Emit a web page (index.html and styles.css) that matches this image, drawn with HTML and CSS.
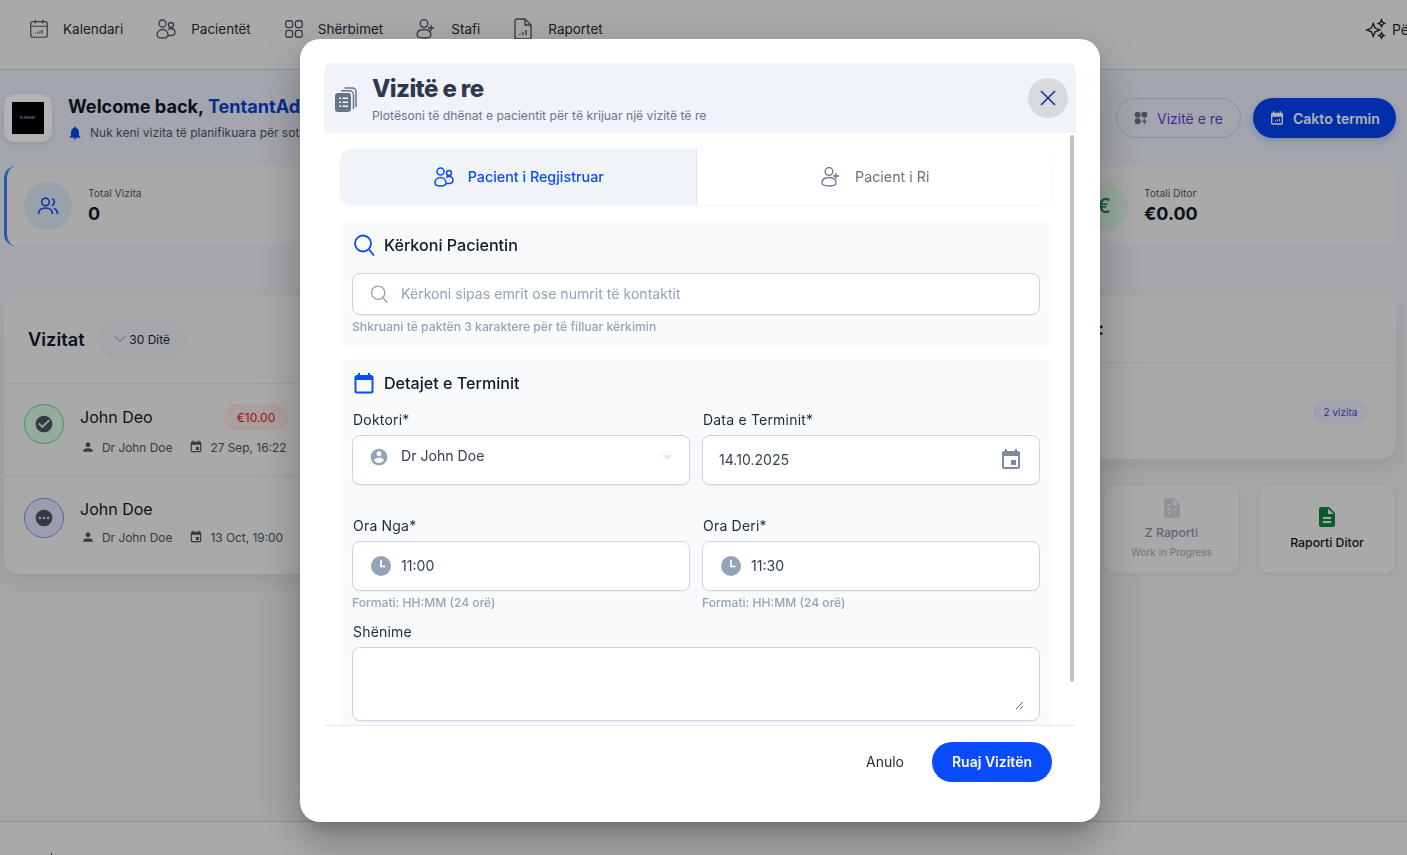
FILE: index.html
```html
<!DOCTYPE html>
<html lang="sq">
<head>
<meta charset="utf-8">
<title>Vizitë e re</title>
<link rel="stylesheet" href="styles.css">
</head>
<body>
<div class="page">
  <header class="topbar">
    <nav class="nav">
      <a class="nav-item"><svg class="ico22" viewBox="0 0 24 24" fill="none" stroke="currentColor" stroke-width="1.3"><rect x="3" y="4" width="18" height="17" rx="2.5"/><path d="M3 9h18M8 2v4M16 2v4M8 17v-1M10.500 17v-2M13 17v-3M15.500 17v-4" /></svg>Kalendari</a>
      <a class="nav-item"><svg class="ico24" viewBox="0 0 24 24" fill="none" stroke="currentColor" stroke-width="1.3"><circle cx="8.500" cy="6.500" r="3.500"/><circle cx="17" cy="8" r="2.500"/><path d="M3 18c0-3.500 2.500-5.500 5.500-5.500s5.500 2 5.500 5.500c0 2-2 3-5.500 3S3 20 3 18zM14 12.500c1-.8 2-1 3-1 2.500 0 4 1.800 4 4 0 2-1.500 3-4 3h-3"/></svg>Pacientët</a>
      <a class="nav-item nav-grid"><svg class="ico22" viewBox="0 0 24 24" fill="none" stroke="currentColor" stroke-width="1.4"><rect x="3" y="3" width="7.500" height="7.500" rx="2.500"/><rect x="13.500" y="3" width="7.500" height="7.500" rx="2.500"/><rect x="3" y="13.500" width="7.500" height="7.500" rx="2.500"/><rect x="13.500" y="13.500" width="7.500" height="7.500" rx="2.500"/></svg>Shërbimet</a>
      <a class="nav-item"><svg class="ico24" viewBox="0 0 24 24" fill="none" stroke="currentColor" stroke-width="1.3"><circle cx="10" cy="6.500" r="3.800"/><path d="M3 18c0-3.500 3-5.500 7-5.500s7 2 7 5.500c0 2-3 3-7 3s-7-1-7-3zM17 8v6M14 11h6" /></svg>Stafi</a>
      <a class="nav-item"><svg class="ico24" viewBox="0 0 24 24" fill="none" stroke="currentColor" stroke-width="1.3"><path d="M6 2h8l6 6v12a2 2 0 0 1-2 2H6a2 2 0 0 1-2-2V4a2 2 0 0 1 2-2zM14 2v6h6M9 18v-1M12 18v-3M15 18v-5"/></svg>Raportet</a>
    </nav>
    <a class="nav-item nav-ai"><svg class="ico22" viewBox="0 0 24 24" fill="none" stroke="currentColor" stroke-width="1.5"><path d="M9 6l2 5 5 2-5 2-2 5-2-5-5-2 5-2zM18 2l1 2.500L21.500 6 19 7l-1 2.500L17 7l-2.500-1L17 4.500zM18 16l1 2 2 1-2 1-1 2-1-2-2-1 2-1z"/></svg>Për</a>
  </header>

  <main class="content">
    <section class="welcome">
      <div class="welcome-left">
        <div class="logo"><div class="logo-black"><span class="logo-text">KLINIKABC</span></div></div>
        <div>
          <h1 class="welcome-title">Welcome back, <span class="brand">TentantAdmin</span></h1>
          <p class="welcome-sub"><svg class="ico16 blue-dark" viewBox="0 0 24 24" fill="currentColor"><path d="M12 22c1.100 0 2-.9 2-2h-4c0 1.100.89 2 2 2zm6-6v-5c0-3.070-1.640-5.640-4.500-6.320V4c0-.83-.67-1.500-1.500-1.500s-1.500.67-1.500 1.500v.68C7.630 5.360 6 7.920 6 11v5l-2 2v1h16v-1l-2-2z"/></svg>Nuk keni vizita të planifikuara për sot</p>
        </div>
      </div>
      <div class="welcome-actions">
        <button class="btn-outline"><svg class="ico16" viewBox="0 0 24 24" fill="currentColor"><circle cx="7" cy="7" r="4.500"/><circle cx="17" cy="7" r="4.500"/><circle cx="7" cy="17" r="4.500"/><path d="M16 13h2v3h3v2h-3v3h-2v-3h-3v-2h3z"/></svg><span>Vizitë e re</span></button>
        <button class="btn-solid"><svg class="ico16" viewBox="0 0 24 24" fill="currentColor"><path fill-rule="evenodd" d="M19 4h-1V2h-2v2H8V2H6v2H5a2 2 0 0 0-2 2v14a2 2 0 0 0 2 2h14a2 2 0 0 0 2-2V6a2 2 0 0 0-2-2zm0 16H5V10h14zM9 17h1.500v-2H9zm3 0h1.500v-3H12zm3 0h1.500v-4H15z"/></svg>Cakto termin</button>
      </div>
    </section>

    <section class="stats">
      <article class="stat stat-first">
        <div class="stat-icon stat-blue"><svg class="ico24" viewBox="0 0 24 24" fill="none" stroke="currentColor" stroke-width="1.500"><circle cx="9.500" cy="8" r="3.800"/><path d="M2.500 20c0-4 3-6 7-6s7 2 7 6M16 4.500a3.800 3.800 0 0 1 0 7M18 14.500c2 .8 3.500 2.500 3.500 5.500"/></svg></div>
        <div><div class="stat-label">Total Vizita</div><div class="stat-value">0</div></div>
      </article>
      <article class="stat stat-last">
        <div class="stat-icon stat-green">€</div>
        <div><div class="stat-label">Totali Ditor</div><div class="stat-value">€0.00</div></div>
      </article>
    </section>

    <section class="columns">
      <div class="panel visits">
        <div class="visits-head">
          <h2 class="visits-title">Vizitat</h2>
          <div class="chip"><svg class="ico12" viewBox="0 0 24 24" fill="none" stroke="currentColor" stroke-width="1.800"><path d="M2 7l10 10L22 7"/></svg>30 Ditë</div>
        </div>
        <div class="visit">
          <div class="status status-done"><svg class="ico20" viewBox="0 0 24 24" fill="currentColor"><path d="M12 2C6.480 2 2 6.480 2 12s4.480 10 10 10 10-4.480 10-10S17.520 2 12 2zm-2 15l-5-5 1.410-1.410L10 14.170l7.590-7.590L19 8l-9 9z"/></svg></div>
          <div class="visit-body">
            <div class="visit-top"><span class="visit-name">John Deo</span><span class="price">€10.00</span></div>
            <div class="visit-meta"><svg class="ico14" viewBox="0 0 24 24" fill="currentColor"><path d="M12 12c2.210 0 4-1.790 4-4s-1.790-4-4-4-4 1.790-4 4 1.790 4 4 4zm0 2c-2.670 0-8 1.340-8 4v2h16v-2c0-2.660-5.330-4-8-4z"/></svg><span>Dr John Doe</span><svg class="ico14 meta-gap" viewBox="0 0 24 24" fill="currentColor"><path d="M17 12h-5v5h5v-5zM16 1v2H8V1H6v2H5c-1.110 0-1.990.9-1.990 2L3 19c0 1.100.89 2 2 2h14c1.100 0 2-.9 2-2V5c0-1.100-.9-2-2-2h-1V1h-2zm3 18H5V8h14v11z"/></svg><span>27 Sep, 16:22</span></div>
          </div>
        </div>
        <div class="visit">
          <div class="status status-wait"><svg class="ico20" viewBox="0 0 24 24" fill="currentColor"><path fill-rule="evenodd" d="M12 2a10 10 0 1 0 0 20 10 10 0 0 0 0-20zM7 10.500a1.500 1.500 0 1 1 0 3 1.500 1.500 0 0 1 0-3zm5 0a1.500 1.500 0 1 1 0 3 1.500 1.500 0 0 1 0-3zm5 0a1.500 1.500 0 1 1 0 3 1.500 1.500 0 0 1 0-3z"/></svg></div>
          <div class="visit-body">
            <div class="visit-top"><span class="visit-name">John Doe</span></div>
            <div class="visit-meta"><svg class="ico14" viewBox="0 0 24 24" fill="currentColor"><path d="M12 12c2.210 0 4-1.790 4-4s-1.790-4-4-4-4 1.790-4 4 1.790 4 4 4zm0 2c-2.670 0-8 1.340-8 4v2h16v-2c0-2.660-5.330-4-8-4z"/></svg><span>Dr John Doe</span><svg class="ico14 meta-gap" viewBox="0 0 24 24" fill="currentColor"><path d="M17 12h-5v5h5v-5zM16 1v2H8V1H6v2H5c-1.110 0-1.990.9-1.990 2L3 19c0 1.100.89 2 2 2h14c1.100 0 2-.9 2-2V5c0-1.100-.9-2-2-2h-1V1h-2zm3 18H5V8h14v11z"/></svg><span>13 Oct, 19:00</span></div>
          </div>
        </div>
      </div>
      <div class="right-col">
        <div class="panel schedule">
          <div class="schedule-head"><h2 class="schedule-title">Vizitat sipas doktorit:</h2></div>
          <div class="schedule-body"><span class="count">2 vizita</span></div>
        </div>
        <div class="reports">
          <div class="report report-off">
            <svg class="ico24" viewBox="0 0 24 24" fill="currentColor"><path fill-rule="evenodd" d="M14 2H6a2 2 0 0 0-2 2v16a2 2 0 0 0 2 2h12a2 2 0 0 0 2-2V8zM13 9V3.500L18.500 9zM8 8h2v2H8zM8 12h2v2H8zM8 16h2v2H8z"/></svg>
            <div class="report-title">Z Raporti</div>
            <div class="report-sub">Work in Progress</div>
          </div>
          <div class="report report-on">
            <svg class="ico24 green" viewBox="0 0 24 24" fill="currentColor"><path d="M14 2H6c-1.100 0-1.990.9-1.990 2L4 20c0 1.100.89 2 1.990 2H18c1.100 0 2-.9 2-2V8l-6-6zm2 16H8v-2h8v2zm0-4H8v-2h8v2zm-3-5V3.500L18.500 9H13z"/></svg>
            <div class="report-title">Raporti Ditor</div>
          </div>
        </div>
      </div>
    </section>
  </main>
  <footer class="footer"></footer>
</div>

<div class="backdrop">
  <div class="modal" role="dialog">
    <div class="modal-head">
      <svg class="head-icon" viewBox="0 0 22 25"><path d="M6 3.800h8.500a4 4 0 0 1 4 4V22M9.500 .9h7.500a4 4 0 0 1 4 4V20" fill="none" stroke="currentColor" stroke-width="1.500"/><path fill="currentColor" fill-rule="evenodd" d="M3 6h10a3 3 0 0 1 3 3v13a3 3 0 0 1-3 3H3a3 3 0 0 1-3-3V9a3 3 0 0 1 3-3zm1 4.500V12h2v-1.500zm3.500 0V12H13v-1.500zM4 14.500V16h2v-1.500zm3.500 0V16H13v-1.500zM4 18.500V20h2v-1.500zm3.500 0V20H13v-1.500z"/></svg>
      <div class="head-text">
        <h2 class="modal-title">Vizitë e re</h2>
        <p class="modal-sub">Plotësoni të dhënat e pacientit për të krijuar një vizitë të re</p>
      </div>
      <button class="close" aria-label="Mbyll"><svg viewBox="0 0 24 24" fill="none" stroke="currentColor" stroke-width="1.700"><path d="M5 5l14 14M19 5L5 19"/></svg></button>
    </div>

    <div class="modal-body">
      <div class="scroll-thumb"></div>
      <div class="tabs">
        <div class="tab tab-active"><svg class="ico24" viewBox="0 0 24 24" fill="none" stroke="currentColor" stroke-width="1.500"><circle cx="8.500" cy="6.500" r="3.500"/><circle cx="17" cy="8" r="2.500"/><path d="M3 18c0-3.500 2.500-5.500 5.500-5.500s5.500 2 5.500 5.500c0 2-2 3-5.500 3S3 20 3 18zM14 12.500c1-.8 2-1 3-1 2.500 0 4 1.800 4 4 0 2-1.500 3-4 3h-3"/></svg><span class="tab-text">Pacient i Regjistruar</span></div>
        <div class="tab"><svg class="ico24" viewBox="0 0 24 24" fill="none" stroke="currentColor" stroke-width="1.300"><circle cx="10" cy="6.500" r="3.800"/><path d="M3 18c0-3.500 3-5.500 7-5.500s7 2 7 5.500c0 2-3 3-7 3s-7-1-7-3zM17 8v6M14 11h6"/></svg><span class="tab-text">Pacient i Ri</span></div>
      </div>

      <section class="group group-search">
        <h3 class="group-title"><svg class="ico24 accent" viewBox="0 0 24 24" fill="none" stroke="currentColor" stroke-width="1.800"><circle cx="11" cy="10.500" r="8"/><path d="M17 16.500l5 6"/></svg>Kërkoni Pacientin</h3>
        <div class="field field-search"><svg class="ico20 muted" viewBox="0 0 24 24" fill="none" stroke="currentColor" stroke-width="1.600"><circle cx="11" cy="10.500" r="8"/><path d="M17 16.500l5 6"/></svg><span class="placeholder">Kërkoni sipas emrit ose numrit të kontaktit</span></div>
        <p class="hint hint-wide">Shkruani të paktën 3 karaktere për të filluar kërkimin</p>
      </section>

      <section class="group group-details">
        <h3 class="group-title"><svg class="ico24 accent" viewBox="0 0 24 24" fill="currentColor"><path d="M19 4h-1V2h-2v2H8V2H6v2H5a2.500 2.500 0 0 0-2.500 2.500V20A2.500 2.500 0 0 0 5 22.500h14a2.500 2.500 0 0 0 2.500-2.500V6.500A2.500 2.500 0 0 0 19 4zm.5 16a.5.5 0 0 1-.5.5H5a.5.5 0 0 1-.5-.5V9h15z"/></svg>Detajet e Terminit</h3>
        <div class="form-grid">
          <div>
            <label class="label">Doktori*</label>
            <div class="field field-tall field-doc"><svg class="ico20 muted" viewBox="0 0 24 24" fill="currentColor"><path d="M12 2C6.480 2 2 6.480 2 12s4.480 10 10 10 10-4.480 10-10S17.520 2 12 2zm0 3c1.660 0 3 1.340 3 3s-1.340 3-3 3-3-1.340-3-3 1.340-3 3-3zm0 14.200c-2.500 0-4.710-1.280-6-3.220.03-1.990 4-3.080 6-3.080 1.990 0 5.970 1.090 6 3.080-1.290 1.940-3.500 3.220-6 3.220z"/></svg><span class="value">Dr John Doe</span><span class="caret"></span></div>
          </div>
          <div>
            <label class="label">Data e Terminit*</label>
            <div class="field field-tall field-date"><span class="value">14.10.2025</span><svg class="ico24 muted-dark" viewBox="0 0 24 24" fill="currentColor"><path d="M17 12h-5v5h5v-5zM16 1v2H8V1H6v2H5c-1.110 0-1.990.9-1.990 2L3 19c0 1.100.89 2 2 2h14c1.100 0 2-.9 2-2V5c0-1.100-.9-2-2-2h-1V1h-2zm3 18H5V8h14v11z"/></svg></div>
          </div>
          <div class="row-time">
            <label class="label">Ora Nga*</label>
            <div class="field field-tall field-time"><svg class="ico24 muted" viewBox="0 0 24 24"><circle cx="12" cy="12" r="10" fill="currentColor"/><path d="M12 6v6.500h4.500" fill="none" stroke="#fff" stroke-width="1.700"/></svg><span class="value">11:00</span></div>
            <p class="hint">Formati: HH:MM (24 orë)</p>
          </div>
          <div class="row-time">
            <label class="label">Ora Deri*</label>
            <div class="field field-tall field-time"><svg class="ico24 muted" viewBox="0 0 24 24"><circle cx="12" cy="12" r="10" fill="currentColor"/><path d="M12 6v6.500h4.500" fill="none" stroke="#fff" stroke-width="1.700"/></svg><span class="value">11:30</span></div>
            <p class="hint">Formati: HH:MM (24 orë)</p>
          </div>
        </div>
        <label class="label label-notes">Shënime</label>
        <div class="notes-box"><textarea class="notes"></textarea></div>
      </section>
    </div>

    <div class="modal-foot">
      <button class="btn-cancel">Anulo</button>
      <button class="btn-save">Ruaj Vizitën</button>
    </div>
  </div>
</div>
</body>
</html>
```

FILE: styles.css
```css
* { box-sizing: border-box; }
html, body { margin: 0; height: 100%; overflow: hidden; }
body { font-family: Inter, "Noto Sans", sans-serif; color: #111827; background: #ecedf0; }
h1, h2, h3, p { margin: 0; }
button { font-family: inherit; border: 0; cursor: pointer; }
svg { display: block; flex: none; }

.ico12 { width: 12px; height: 12px; }
.ico14 { width: 14px; height: 14px; }
.ico16 { width: 16px; height: 16px; }
.ico20 { width: 20px; height: 20px; }
.ico22 { width: 22px; height: 22px; }
.ico24 { width: 24px; height: 24px; }

.page { height: 855px; display: flex; flex-direction: column; overflow: hidden; background: linear-gradient(#e9eef8, #ecedf0 60%); }

.topbar { height: 70px; flex: none; background: #f3f3f3; border-bottom: 1px solid #ced2d9; display: flex; justify-content: space-between; padding: 17px 0 0 28px; overflow: hidden; }
.nav { display: flex; gap: 31px; height: 24px; }
.nav-item { display: flex; align-items: center; gap: 13px; font-size: 13.500px; color: #1f2937; white-space: nowrap; height: 24px; }
.nav-item svg { color: #4b5563; }
.nav-grid { margin-left: 1px; }
.nav-ai { gap: 5px; width: 42px; overflow: hidden; font-size: 14px; }
.nav-ai svg { color: #1f2937; }

.content { flex: 1; padding: 24px 11px 0 4px; min-height: 0; }
.welcome { display: flex; justify-content: space-between; align-items: center; height: 48px; }
.welcome-left { display: flex; align-items: center; gap: 16px; }
.logo { width: 48px; height: 48px; border-radius: 10px; background: #fff; display: flex; align-items: center; justify-content: center; box-shadow: 0 2px 6px rgba(0,0,0,.1); }
.logo-black { width: 32px; height: 32px; background: #000; display: flex; align-items: center; justify-content: center; }
.logo-text { font-size: 3px; color: #d8c8fa; white-space: nowrap; }
.welcome-title { font-size: 18.100px; font-weight: 700; line-height: 24px; color: #111827; white-space: nowrap; margin-top: -1px; }
.brand { color: #0b3fd1; }
.welcome-sub { display: flex; align-items: center; gap: 6px; margin-top: 7px; font-size: 12px; line-height: 16px; color: #4b5563; white-space: nowrap; }
.blue-dark { color: #0b46e0; margin-left: -1px; margin-right: 1px; }
.welcome-actions { display: flex; gap: 12px; }
.btn-outline, .btn-solid { height: 40px; border-radius: 20px; display: flex; align-items: center; font-size: 14px; gap: 8px; padding-bottom: 1px; }
.btn-outline { width: 125px; padding-left: 16px; background: transparent; border: 1px solid #c9ced8; color: #6b7280; }
.btn-outline span { color: #5a3fd6; }
.btn-solid { width: 143px; padding-left: 16px; background: #0344f2; color: #fff; font-weight: 600; box-shadow: 0 3px 8px rgba(3,68,242,.25); }

.stats { margin-top: 24px; display: flex; justify-content: space-between; height: 80px; }
.stat { height: 80px; width: 600px; background: #f3f3f3; border-radius: 12px; display: flex; align-items: center; gap: 16px; }
.stat-first { padding-left: 17px; border-left: 3px solid #3b82f6; }
.stat-last { padding-left: 184px; width: 500px; }
.stat-icon { width: 48px; height: 48px; border-radius: 50%; display: flex; align-items: center; justify-content: center; flex: none; }
.stat-blue { background: #dbe7f8; color: #0b46e0; }
.stat-green { background: #d9f5e1; color: #16823f; font-size: 20px; font-weight: 500; }
.stat-label { font-size: 10.300px; line-height: 14px; color: #4b5563; }
.stat-value { font-size: 18px; line-height: 26px; font-weight: 700; color: #111827; margin-top: 1px; }

.columns { margin-top: 49px; display: flex; justify-content: space-between; align-items: flex-start; }
.panel { background: #f3f3f3; border-radius: 16px; box-shadow: 0 8px 20px rgba(0,0,0,.08); }
.visits { width: 600px; height: 279px; }
.visits-head { height: 89px; display: flex; align-items: center; padding-left: 24px; gap: 13px; border-bottom: 1px solid #e4e6ea; }
.visits-title { font-size: 18.300px; font-weight: 600; color: #111827; }
.chip { width: 89px; height: 40px; border-radius: 20px; background: #eceef2; display: flex; align-items: center; justify-content: center; gap: 3px; font-size: 12px; color: #1f2937; }
.chip svg { color: #6b7280; }
.visit { display: flex; gap: 16px; padding: 20px; }
.visit:nth-child(2) { height: 93px; border-bottom: 1px solid #e4e6ea; }
.visit:nth-child(3) { padding-top: 21px; }
.status { width: 40px; height: 40px; border-radius: 50%; display: flex; align-items: center; justify-content: center; color: #4b5563; flex: none; }
.status-done { background: #d9f5e1; border: 1px solid #4ade80; }
.status-wait { background: #dfe3fb; border: 1px solid #818cf8; }
.visit-body { width: 208px; }
.visit-top { display: flex; justify-content: space-between; align-items: center; min-height: 22px; }
.visit-name { font-size: 16px; line-height: 22px; color: #111827; }
.price { width: 64px; height: 26px; border-radius: 13px; background: #f5e3e3; color: #dc1f1f; font-size: 12px; display: flex; align-items: center; justify-content: center; }
.visit-meta { display: flex; align-items: center; margin-top: 10px; height: 14px; font-size: 11.900px; color: #4b5563; white-space: nowrap; }
.visit-meta svg { margin: 0 7px 0 1px; }
.visit-meta .meta-gap { margin-left: 17px; }

.right-col { width: 600px; }
.schedule { height: 164px; }
.schedule-head { height: 68px; border-bottom: 1px solid #e4e6ea; display: flex; align-items: center; justify-content: flex-end; padding-right: 292px; }
.schedule-title { font-size: 18px; font-weight: 600; color: #111827; white-space: nowrap; }
.schedule-body { height: 96px; display: flex; justify-content: flex-end; align-items: flex-start; padding: 37px 28px 0 0; }
.count { width: 55px; height: 23px; border-radius: 12px; background: #e7e9fb; color: #5a3fd6; font-size: 10px; display: flex; align-items: center; justify-content: center; }
.reports { margin-top: 25px; display: flex; justify-content: flex-end; gap: 18px; }
.report { width: 138px; height: 90px; background: #f3f3f3; border-radius: 12px; border: 1px solid #dfe3ea; box-shadow: 0 1px 4px rgba(0,0,0,.06); display: flex; flex-direction: column; align-items: center; }
.report-title { font-size: 12.300px; line-height: 15px; font-weight: 500; color: #111827; margin-top: 6px; }
.report-on { padding-top: 20px; }
.report-off { color: #9ca3af; width: 137px; padding-top: 11px; }
.report-off svg { color: #cfd4dc; }
.report-off .report-title { color: #8a93a3; margin-top: 5px; }
.report-sub { font-size: 10px; line-height: 12px; color: #9ca3af; margin-top: 6px; }
.green { color: #16823f; }

.footer { height: 34px; flex: none; background: #f3f3f3; border-top: 1px solid #ced2d9; position: relative; }
.footer::before { content: ""; position: absolute; left: 51px; bottom: 0; width: 1px; height: 2px; background: #374151; }

.backdrop { position: fixed; inset: 0; background: rgba(0,0,0,.3); padding: 39px 0 0 300px; }
.modal { width: 800px; height: 783px; background: #fff; border-radius: 20px; padding: 24px 24px 0; display: flex; flex-direction: column; box-shadow: 0 11px 15px -7px rgba(0,0,0,.2), 0 24px 38px 3px rgba(0,0,0,.14), 0 9px 46px 8px rgba(0,0,0,.12); }
.modal-head { height: 70px; flex: none; background: #f0f3f8; border-radius: 8px 8px 0 0; display: flex; align-items: center; padding: 0 8px 0 11px; }
.head-icon { width: 22px; height: 25px; color: #64748b; margin-right: 15px; margin-top: 2px; }
.head-text { flex: 1; padding-top: 1px; }
.modal-title { font-size: 24px; line-height: 30px; font-weight: 800; color: #2d3a4d; letter-spacing: -.6px; }
.modal-sub { font-size: 12.200px; line-height: 16px; margin-top: 4px; color: #6b7788; }
.close { width: 40px; height: 40px; border-radius: 50%; background: #d6d9de; color: #1e3a8a; padding: 8px; }

.modal-body { height: 592px; flex: none; position: relative; overflow: hidden; padding: 16px 24px 0 16px; }
.scroll-thumb { position: absolute; top: 2px; right: 2px; width: 4px; height: 547px; border-radius: 2px; background: #c1c1c1; }

.tabs { display: flex; height: 56px; border-radius: 12px; box-shadow: 0 1px 3px rgba(0,0,0,.06); overflow: hidden; }
.tab { flex: 1; display: flex; align-items: center; justify-content: center; gap: 12px; font-size: 14.300px; color: #6b7280; background: #fff; }
.tab svg { color: #64748b; }
.tab-text { padding-bottom: 2px; }
.tab-active { background: #f0f3f8; color: #0a4bff; font-weight: 500; border-right: 1px solid #dfe4ec; }
.tab-active svg { color: #0a4bff; }

.group { background: #f8fafc; border-radius: 12px; padding: 12px; }
.group-search { margin-top: 16px; height: 126px; }
.group-details { margin-top: 12px; height: 400px; }
.group-title { display: flex; align-items: center; gap: 8px; height: 24px; font-size: 16.100px; font-weight: 500; color: #111827; }
.accent { color: #0a4bff; }
.muted { color: #94a3b8; }
.muted-dark { color: #7c8ba1; }

.field { background: #fff; border: 1px solid #cbd5e1; border-radius: 8px; display: flex; align-items: center; font-size: 14.100px; padding-left: 16px; box-shadow: 0 1px 2px rgba(15,23,42,.05); }
.field-search { margin-top: 16px; height: 42px; gap: 12px; }
.placeholder { color: #94a3b8; padding-bottom: 2px; }
.hint { font-size: 12.100px; line-height: 14px; font-weight: 500; color: #94a3b8; margin-top: 5px; white-space: nowrap; }
.hint-wide { font-size: 12.200px; }
.form-grid { display: grid; grid-template-columns: 338px 338px; column-gap: 12px; margin-top: 16px; }
.label { display: block; font-size: 14px; line-height: 18px; letter-spacing: .2px; color: #1f2937; padding-left: 1px; margin-bottom: 6px; }
.field-tall { height: 50px; gap: 10px; }
.value { color: #374151; }
.field-doc { align-items: flex-start; padding-top: 11px; gap: 12px; position: relative; }
.caret { position: absolute; top: 19px; right: 17px; border: 5px solid transparent; border-top: 5px solid #e2e8f0; }
.field-date { justify-content: space-between; padding-right: 16px; padding-bottom: 1px; }
.field-time { gap: 8px; padding-bottom: 1px; }
.row-time { margin-top: 32px; }
.label-notes { margin-top: 13px; }
.notes-box { height: 74px; border: 1px solid #cbd5e1; border-radius: 8px; background: #fff; padding: 0 15px 10px 14px; box-shadow: 0 1px 2px rgba(15,23,42,.05); }
.notes { display: block; width: 100%; height: 100%; border: 0; outline: 0; background: transparent; }

.modal-foot { flex: none; height: 97px; border-top: 1px solid #e5e9f0; display: flex; justify-content: flex-end; align-items: flex-start; padding: 16px 24px 0 0; gap: 12px; }
.btn-cancel { height: 40px; width: 70px; background: transparent; font-size: 14px; color: #1f2937; padding: 0 0 2px; }
.btn-save { height: 40px; width: 120px; border-radius: 20px; background: #0a4bff; color: #fff; font-size: 14px; font-weight: 600; padding: 0 0 2px; }
```
